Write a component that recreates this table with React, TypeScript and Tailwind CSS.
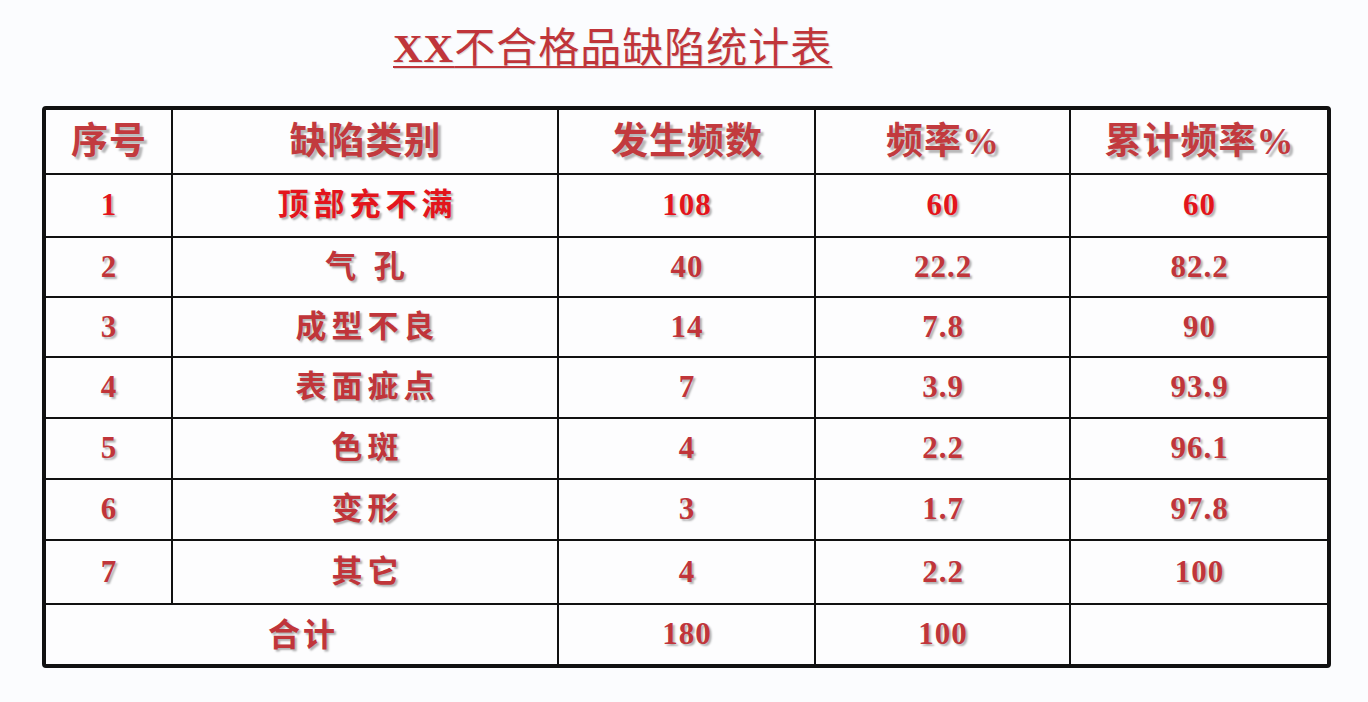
import React from "react";

const rows = [
  { no: "1", name: "顶部充不满", count: "108", rate: "60", total: "60", hot: true },
  { no: "2", name: "气 孔", count: "40", rate: "22.2", total: "82.2" },
  { no: "3", name: "成型不良", count: "14", rate: "7.8", total: "90" },
  { no: "4", name: "表面疵点", count: "7", rate: "3.9", total: "93.9" },
  { no: "5", name: "色斑", count: "4", rate: "2.2", total: "96.1" },
  { no: "6", name: "变形", count: "3", rate: "1.7", total: "97.8" },
  { no: "7", name: "其它", count: "4", rate: "2.2", total: "100" },
];

const font = "font-['Liberation_Serif','Noto_Sans_CJK_SC',serif]";
const shadow = "[text-shadow:2px_2px_2px_rgba(0,0,0,0.3)]";
const cell = `bg-[#fdfdfe] flex items-center justify-center ${font} ${shadow}`;
const num = "text-[31px] font-bold tracking-[1px] pl-[1px]";

const App = () => {
  return (
    <div className="w-[1368px] h-[702px] bg-[#fbfcfe] overflow-hidden">
      <div className="pt-[25px] pl-[393px] h-[106px]">
        <h1
          className={`${font} text-[41px] leading-[46px] text-[#c0353a] underline decoration-[2px] underline-offset-[4px] tracking-[1px] [text-shadow:1px_1px_1px_rgba(0,0,0,0.15)]`}
        >
          <span className="font-bold">XX</span>不合格品缺陷统计表
        </h1>
      </div>

      <div className="ml-[42px] w-[1289px] border-4 border-[#111] rounded-[4px] overflow-hidden">
        <div className="grid grid-cols-[125px_384px_255px_253px_256px] grid-rows-[63px_61px_58px_58px_59px_59px_59px_62px_59px] gap-[2px] bg-[#111]">
          {["序号", "缺陷类别", "发生频数", "频率%", "累计频率%"].map((h) => (
            <div
              key={h}
              className={`${cell} text-[37px] font-bold text-[#c23a3e] tracking-[1px] pl-[1px] [text-shadow:3px_3px_2px_rgba(0,0,0,0.28)]`}
            >
              {h}
            </div>
          ))}

          {rows.map((r) => {
            const color = r.hot ? "text-[#e3151c]" : "text-[#c0353a]";
            return (
              <React.Fragment key={r.no}>
                <div className={`${cell} ${color} text-[31px] font-bold`}>{r.no}</div>
                <div className={`${cell} ${color} text-[31px] font-bold tracking-[5px] pl-[5px] whitespace-pre`}>
                  {r.name}
                </div>
                <div className={`${cell} ${color} ${num}`}>{r.count}</div>
                <div className={`${cell} ${color} ${num}`}>{r.rate}</div>
                <div className={`${cell} ${color} ${num}`}>{r.total}</div>
              </React.Fragment>
            );
          })}

          <div className={`${cell} col-span-2 text-[32px] font-bold text-[#c0353a] tracking-[3px] pl-[3px]`}>
            合计
          </div>
          <div className={`${cell} text-[#c0353a] ${num}`}>180</div>
          <div className={`${cell} text-[#c0353a] ${num}`}>100</div>
          <div className={cell}></div>
        </div>
      </div>
    </div>
  );
};

export default App;
